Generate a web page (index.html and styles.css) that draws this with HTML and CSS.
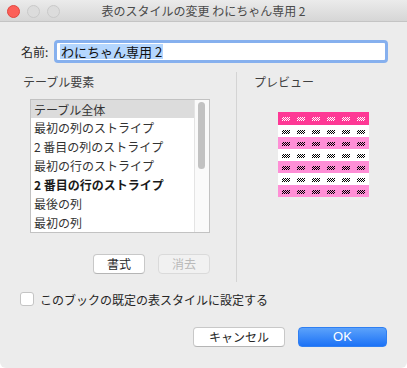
FILE: index.html
```
<!DOCTYPE html>
<html>
<head>
    <meta charset="utf-8">
    <title>表のスタイルの変更</title>
    <link rel="stylesheet" href="styles.css">
</head>
<body>
    <div class="window">
        <div class="titlebar">
            <div class="lights">
                <span class="light close"></span>
                <span class="light"></span>
                <span class="light"></span>
            </div>
            <div class="title">表のスタイルの変更 わにちゃん専用 2</div>
            <div></div>
        </div>

        <div class="content">
            <div class="name-row">
                <label class="name-label">名前:</label>
                <div class="name-input"><span class="selection">わにちゃん専用 2</span></div>
            </div>

            <div class="panes">
                <div class="pane-left">
                    <div class="heading">テーブル要素</div>
                    <div class="list">
                        <ul class="items">
                            <li class="selected">テーブル全体</li>
                            <li>最初の列のストライプ</li>
                            <li>2 番目の列のストライプ</li>
                            <li>最初の行のストライプ</li>
                            <li class="bold">2 番目の行のストライプ</li>
                            <li>最後の列</li>
                            <li>最初の列</li>
                        </ul>
                        <div class="scrollbar"><div class="thumb"></div></div>
                    </div>
                    <div class="list-buttons">
                        <button class="btn">書式</button>
                        <button class="btn" disabled>消去</button>
                    </div>
                </div>

                <div class="pane-right">
                    <div class="heading">プレビュー</div>
                    <table class="preview" id="preview"></table>
                </div>
            </div>

            <label class="check-row">
                <span class="checkbox"></span>
                このブックの既定の表スタイルに設定する
            </label>

            <div class="dialog-buttons">
                <button class="btn wide">キャンセル</button>
                <button class="btn wide default">OK</button>
            </div>
        </div>
    </div>

    <script>
        // プレビューの表を作る (見出し行 + 6 行)
        const table = document.getElementById('preview');
        const rows = ['head', 'plain', 'stripe', 'plain', 'stripe', 'plain', 'stripe'];
        rows.forEach(kind => {
            const tr = document.createElement('tr');
            tr.className = kind;
            for (let i = 0; i < 6; i++) {
                const td = document.createElement('td');
                const mark = document.createElement('span');
                mark.className = 'mark';
                td.appendChild(mark);
                tr.appendChild(td);
            }
            table.appendChild(tr);
        });
    </script>
</body>
</html>
```

FILE: styles.css
```
* {
    box-sizing: border-box;
}
body {
    margin: 0;
    background: #ffffff;
    font-family: "Noto Sans CJK JP", "Liberation Sans", sans-serif;
    font-size: 12px;
    color: #262626;
}
.window {
    width: 407px;
    height: 368px;
    background: #ececec;
    border-radius: 0 0 6px 6px;
    overflow: hidden;
}
.titlebar {
    height: 22px;
    display: grid;
    grid-template-columns: 1fr auto 1fr;
    align-items: center;
    background: linear-gradient(#ebebeb, #d6d6d6);
    border-bottom: 1px solid #c4c4c4;
}
.lights {
    display: flex;
    gap: 7px;
    padding-left: 7px;
}
.light {
    width: 13px;
    height: 13px;
    border-radius: 50%;
    background: #dcdcdc;
    border: 1px solid #c9c9c9;
}
.light.close {
    background: #fc5f58;
    border-color: #e1463f;
}
.title {
    color: #4a4a4a;
    font-size: 12px;
    line-height: 22px;
}
.content {
    display: flex;
    flex-direction: column;
}
.name-row {
    display: flex;
    align-items: center;
    margin-top: 18px;
    padding-left: 21px;
    height: 23px;
}
.name-label {
    width: 33px;
    color: #262626;
}
.name-input {
    width: 334px;
    height: 23px;
    background: #ffffff;
    border: 3px solid #86b0ee;
    border-radius: 4px;
    padding: 1px 3px;
    display: flex;
    align-items: center;
}
.selection {
    background: #b4d6fe;
    color: #111;
    font-size: 13px;
    line-height: 15px;
    padding: 0 1px;
}
.panes {
    display: flex;
    margin-top: 9px;
    height: 210px;
}
.pane-left {
    width: 237px;
    border-right: 1px solid #d4d4d4;
    display: flex;
    flex-direction: column;
}
.heading {
    height: 20px;
    line-height: 20px;
    color: #404040;
}
.pane-left .heading {
    padding-left: 23px;
}
.pane-right .heading {
    padding-left: 17px;
}
.list {
    margin: 7px 0 0 30px;
    width: 180px;
    height: 134px;
    border: 1px solid #c2c2c2;
    background: #ffffff;
    display: flex;
}
.items {
    list-style: none;
    margin: 0;
    padding: 0;
    flex: 1;
}
.items li {
    height: 19px;
    line-height: 19px;
    padding-left: 3px;
    color: #333333;
    white-space: nowrap;
}
.items li.selected {
    background: #dcdcdc;
    height: 18px;
}
.items li.bold {
    font-weight: bold;
    color: #1a1a1a;
}
.scrollbar {
    width: 15px;
    background: #fafafa;
    border-left: 1px solid #e4e4e4;
    padding: 2px 0 0 3px;
}
.thumb {
    width: 7px;
    height: 67px;
    border-radius: 4px;
    background: #c2c2c2;
}
.list-buttons {
    display: flex;
    justify-content: flex-end;
    gap: 13px;
    width: 210px;
    margin-top: 21px;
}
.btn {
    font-family: "Noto Sans CJK JP", "Liberation Sans", sans-serif;
    font-size: 12px;
    width: 52px;
    height: 20px;
    padding: 0;
    background: #ffffff;
    color: #262626;
    border: 1px solid #c8c8c8;
    border-bottom-color: #b5b5b5;
    border-radius: 4px;
    line-height: 18px;
}
.btn:disabled {
    background: #f1f1f1;
    color: #b9b9b9;
    border-color: #dadada;
}
.preview {
    margin: 20px 0 0 41px;
    border-collapse: collapse;
    border-spacing: 0;
    width: 91px;
}
.preview td {
    padding: 0;
    width: 15px;
    height: 12px;
    text-align: center;
    vertical-align: middle;
    line-height: 0;
}
.preview tr.head td {
    height: 13px;
}
.preview tr.head {
    background: #fe3895;
}
.preview tr.plain {
    background: #ffffff;
}
.preview tr.stripe {
    background: #ff8fd6;
}
.mark {
    display: inline-block;
    width: 8px;
    height: 4px;
    background: repeating-conic-gradient(#000000 0 25%, transparent 0 50%) 0 0 / 2px 2px;
}
.head .mark {
    background: repeating-conic-gradient(#ffffff 0 25%, transparent 0 50%) 0 0 / 2px 2px;
}
.check-row {
    display: flex;
    align-items: center;
    gap: 6px;
    margin: 10px 0 0 20px;
    height: 14px;
    color: #262626;
}
.checkbox {
    width: 14px;
    height: 14px;
    background: #ffffff;
    border: 1px solid #c4c4c4;
    border-radius: 3px;
}
.dialog-buttons {
    display: flex;
    justify-content: flex-end;
    gap: 13px;
    margin-top: 21px;
    padding-right: 20px;
}
.btn.wide {
    width: 92px;
    height: 20px;
}
.btn.default {
    width: 89px;
    color: #ffffff;
    border: 1px solid #2f7ff2;
    background: linear-gradient(#5ba2fb, #1c72f6);
    font-family: "Liberation Sans", sans-serif;
    font-size: 13px;
}
```
